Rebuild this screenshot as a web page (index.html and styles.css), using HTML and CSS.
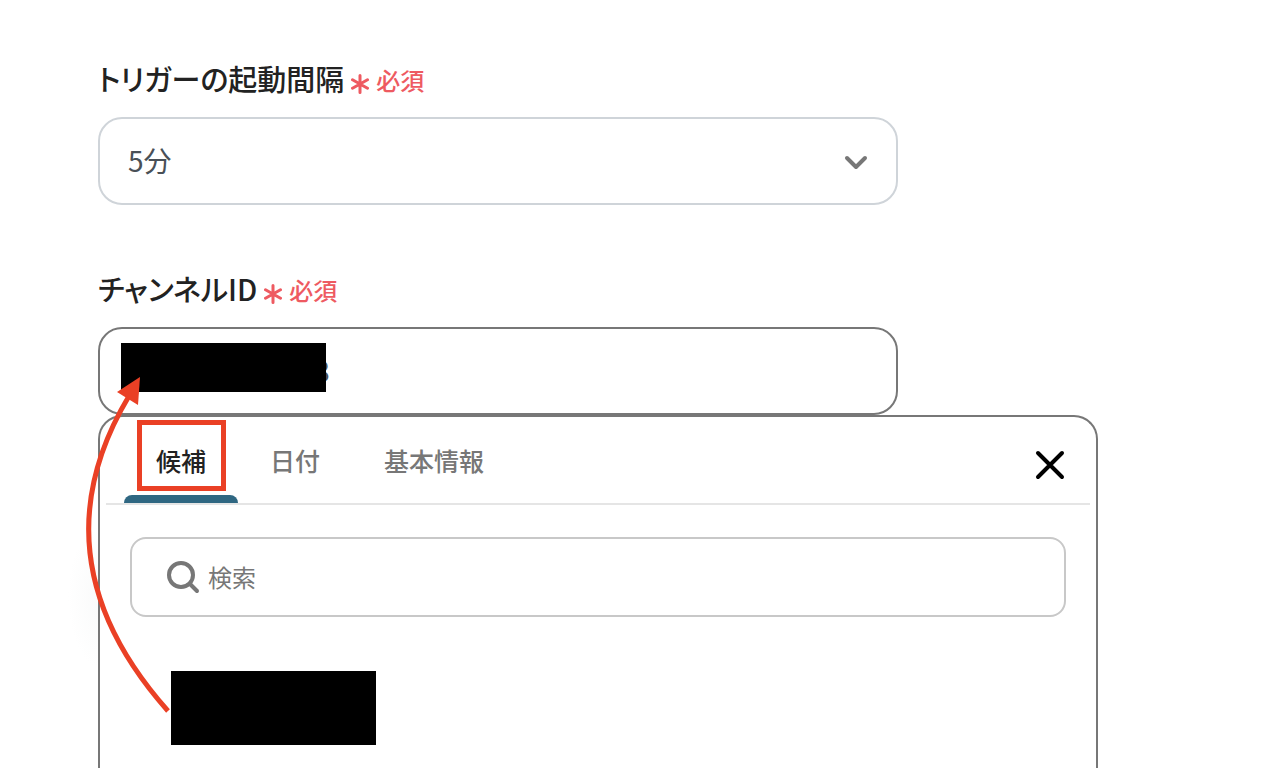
FILE: index.html
```html
<!DOCTYPE html>
<html lang="ja">

<head>
    <meta charset="UTF-8">
    <meta name="viewport" content="width=device-width, initial-scale=1.0">
    <title>トリガー設定</title>
    <link rel="stylesheet" href="styles.css">
</head>

<body>
    <form class="trigger-form">
        <div class="form-group">
            <div class="form-label">
                <label for="interval">トリガーの起動間隔</label>
                <span class="required">
                    <svg width="18" height="20" viewBox="0 0 18 20" aria-hidden="true">
                        <path d="M9 1.5v17M1.5 5.7l15 8.6M16.5 5.7l-15 8.6" />
                    </svg>
                    必須
                </span>
            </div>
            <div class="select-box">
                <select id="interval">
                    <option>5分</option>
                </select>
                <svg class="chevron" width="24" height="16" viewBox="0 0 24 16" aria-hidden="true">
                    <path d="M3 4l9 9 9-9" />
                </svg>
            </div>
        </div>

        <div class="form-group">
            <div class="form-label">
                <label for="channel">チャンネルID</label>
                <span class="required">
                    <svg width="18" height="20" viewBox="0 0 18 20" aria-hidden="true">
                        <path d="M9 1.5v17M1.5 5.7l15 8.6M16.5 5.7l-15 8.6" />
                    </svg>
                    必須
                </span>
            </div>
            <div class="channel-box">
                <input type="text" id="channel" value="8">
                <span class="mask mask-input"></span>
            </div>
        </div>

        <div class="panel">
            <div class="panel-header">
                <div class="tabs" role="tablist">
                    <button type="button" class="tab active" role="tab" aria-selected="true">候補</button>
                    <button type="button" class="tab" role="tab" aria-selected="false">日付</button>
                    <button type="button" class="tab" role="tab" aria-selected="false">基本情報</button>
                </div>
                <button type="button" class="close" aria-label="閉じる">
                    <svg width="32" height="32" viewBox="0 0 32 32">
                        <path d="M4 4l24 24M28 4L4 28" />
                    </svg>
                </button>
            </div>
            <div class="search">
                <svg width="34" height="34" viewBox="0 0 34 34" aria-hidden="true">
                    <circle cx="15" cy="15" r="12" />
                    <path d="M24 24l7 7" />
                </svg>
                <input type="search" placeholder="検索" aria-label="検索">
            </div>
            <ul class="results">
                <li class="mask"></li>
            </ul>

            <span class="highlight"></span>
            <svg class="arrow" width="100" height="350" viewBox="80 370 100 350" aria-hidden="true">
                <path class="arrow-line" d="M168 711C73 604 68 498 129 396" />
                <path class="arrow-head" d="M140 377L117 392L138 405Z" />
            </svg>
        </div>
    </form>
</body>

</html>
```

FILE: styles.css
```css
* {
    box-sizing: border-box;
}

body {
    margin: 0;
    background-color: #fff;
    color: #222;
    font-family: "Noto Sans CJK JP", sans-serif;
}

input,
select,
button {
    font-family: inherit;
}

svg {
    flex: none;
    fill: none;
    stroke-linecap: round;
    stroke-linejoin: round;
}

.trigger-form {
    display: flex;
    flex-direction: column;
    height: 100vh;
    padding: 58px 98px 0;
    overflow: hidden;
}

.form-group {
    width: 100%;
    max-width: 800px;
    margin-bottom: 63px;
}

.form-group:nth-child(2) {
    margin-bottom: 0;
}

.form-label {
    display: flex;
    align-items: center;
    gap: 7px;
    height: 40px;
    margin-bottom: 19px;
}

.form-label label {
    font-size: 29px;
    font-weight: 500;
    line-height: 40px;
    font-feature-settings: "palt";
}

.required {
    display: flex;
    align-items: center;
    gap: 7px;
    padding-top: 4px;
    color: #ee5a61;
    font-size: 24px;
    font-weight: 500;
    line-height: 36px;
}

.required svg {
    margin-top: 8px;
    stroke: #ee5a61;
    stroke-width: 3;
}

.select-box,
.channel-box {
    position: relative;
}

.select-box select,
.channel-box input {
    display: block;
    width: 100%;
    height: 88px;
    padding: 0 28px 3px;
    border: 2px solid #cfd4d9;
    border-radius: 24px;
    outline: none;
    background-color: #fff;
    color: #495057;
    font-size: 28px;
    appearance: none;
}

.chevron {
    position: absolute;
    top: 37px;
    right: 30px;
    stroke: #777;
    stroke-width: 4;
    pointer-events: none;
}

.channel-box input {
    padding-left: 214px;
    border-color: #777;
}

.mask {
    background-color: #000;
}

.mask-input {
    position: absolute;
    top: 16px;
    left: 23px;
    width: 205px;
    height: 49px;
}

.panel {
    position: relative;
    flex: 1;
    width: 100%;
    max-width: 1000px;
    border: 2px solid #777;
    border-bottom: none;
    border-radius: 24px 24px 0 0;
    background-color: #fff;
}

/* soft shade on the left edge */
.panel::before {
    content: "";
    position: absolute;
    z-index: -1;
    top: 110px;
    left: -32px;
    width: 64px;
    height: 140px;
    background: radial-gradient(closest-side, #f9fafa, #fff);
}

.panel-header {
    display: flex;
    justify-content: space-between;
    margin: 0 6px;
    padding: 0 22px 0 18px;
    border-bottom: 2px solid #e5e5e5;
}

.tabs {
    display: flex;
}

.tab {
    position: relative;
    height: 86px;
    padding: 0 32px;
    border: none;
    background: none;
    color: #777;
    font-size: 25px;
    font-weight: 500;
    line-height: 36px;
}

.tab.active {
    color: #222;
}

.tab.active::after {
    content: "";
    position: absolute;
    right: 0;
    bottom: 0;
    left: 0;
    height: 8px;
    border-radius: 8px 8px 0 0;
    background-color: #2f6782;
}

.close {
    display: flex;
    align-items: center;
    padding: 10px 2px 0 0;
    border: none;
    background: none;
}

.close svg {
    stroke: #000;
    stroke-width: 4;
}

.search {
    display: flex;
    align-items: center;
    gap: 8px;
    height: 80px;
    margin: 32px 30px 0;
    padding: 0 34px;
    border: 2px solid #c8c8c8;
    border-radius: 16px;
}

.search svg {
    stroke: #777;
    stroke-width: 4;
}

.search input {
    flex: 1;
    min-width: 0;
    padding: 0;
    border: none;
    outline: none;
    background: none;
    color: #222;
    font-size: 24px;
    line-height: 36px;
}

.search input::placeholder {
    color: #777;
}

.results {
    margin: 54px 0 0;
    padding: 0 71px;
    list-style: none;
}

.results .mask {
    width: 205px;
    height: 74px;
}

.highlight {
    position: absolute;
    top: 3px;
    left: 37px;
    width: 89px;
    height: 71px;
    border: 5px solid #ea4025;
}

.arrow {
    position: absolute;
    top: -47px;
    left: -20px;
    pointer-events: none;
}

.arrow-line {
    stroke: #ea4025;
    stroke-width: 5;
    stroke-linecap: butt;
}

.arrow-head {
    fill: #ea4025;
}
```
